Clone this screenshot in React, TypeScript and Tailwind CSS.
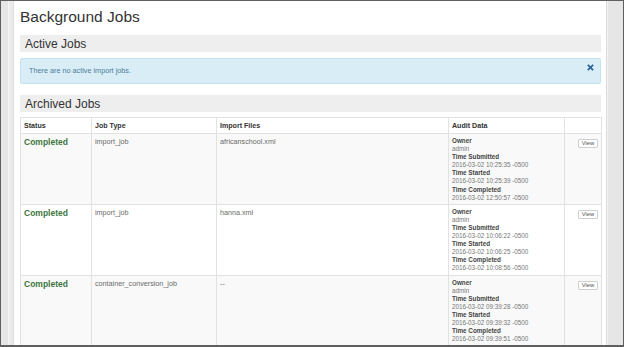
import React from 'react';

const jobs = [
  {
    type: 'import_job',
    file: 'africanschool.xml',
    submitted: '2016-03-02 10:25:35 -0500',
    started: '2016-03-02 10:25:39 -0500',
    completed: '2016-03-02 12:50:57 -0500',
  },
  {
    type: 'import_job',
    file: 'hanna.xml',
    submitted: '2016-03-02 10:06:22 -0500',
    started: '2016-03-02 10:06:25 -0500',
    completed: '2016-03-02 10:08:56 -0500',
  },
  {
    type: 'container_conversion_job',
    file: '--',
    submitted: '2016-03-02 09:39:28 -0500',
    started: '2016-03-02 09:39:32 -0500',
    completed: '2016-03-02 09:39:51 -0500',
  },
];

function AuditData({ job }: { job: (typeof jobs)[number] }) {
  const rows = [
    ['Owner', 'admin'],
    ['Time Submitted', job.submitted],
    ['Time Started', job.started],
    ['Time Completed', job.completed],
  ];
  return (
    <div className="text-[6.3px] leading-[8.1px]">
      {rows.map(([label, value]) => (
        <React.Fragment key={label}>
          <div className="font-bold text-[#444]">{label}</div>
          <div className="text-[#777]">{value}</div>
        </React.Fragment>
      ))}
    </div>
  );
}

export default function App() {
  return (
    <div
      className="w-[624px] h-[347px] border border-[#5f5f5f] border-b-2 bg-[#e8e8e8] flex overflow-hidden"
      style={{ fontFamily: '"Liberation Sans", Arial, sans-serif' }}
    >
      <div className="w-[12px] shrink-0 bg-[#ebebeb] flex">
        <div className="w-[7px] bg-[#e6e6e6]" />
        <div className="w-[1px] bg-[#f6f6f6]" />
      </div>

      <div className="w-[594px] shrink-0 bg-white border-x border-[#dcdcdc] pl-[6px] pr-[5px] pt-[6px]">
        <h1 className="text-[15.5px] leading-[20px] text-[#333]">Background Jobs</h1>

        <div className="mt-[8px] h-[17px] bg-[#eeeeee] px-[5px] flex items-center text-[12px] text-[#333]">
          Active Jobs
        </div>

        <div className="mt-[6px] h-[26px] bg-[#d9edf7] border border-[#c4e3f0] rounded-[2px] pl-[8px] pr-[6px] flex items-center justify-between">
          <span className="text-[7.25px] text-[#4a7d98]">There are no active import jobs.</span>
          <svg viewBox="0 0 10 10" className="w-[7px] h-[7px] self-start mt-[5px]">
            <path d="M2 2 L8 8 M8 2 L2 8" stroke="#2a6399" strokeWidth="2.4" strokeLinecap="square" />
          </svg>
        </div>

        <div className="mt-[11px] h-[17px] bg-[#eeeeee] px-[5px] flex items-center text-[12px] text-[#333]">
          Archived Jobs
        </div>

        <table className="mt-[5px] w-[581px] border-collapse table-fixed">
          <colgroup>
            <col className="w-[71px]" />
            <col className="w-[125px]" />
            <col className="w-[232px]" />
            <col className="w-[116px]" />
            <col className="w-[37px]" />
          </colgroup>
          <thead>
            <tr className="text-[7.1px] font-bold text-[#333] text-left">
              <th className="border border-[#e2e2e2] px-[3px] pt-[3px] pb-[2px] leading-[10px]">Status</th>
              <th className="border border-[#e2e2e2] px-[3px] pt-[3px] pb-[2px] leading-[10px]">Job Type</th>
              <th className="border border-[#e2e2e2] px-[3px] pt-[3px] pb-[2px] leading-[10px]">Import Files</th>
              <th className="border border-[#e2e2e2] px-[3px] pt-[3px] pb-[2px] leading-[10px]">Audit Data</th>
              <th className="border border-[#e2e2e2] px-[3px] pt-[3px] pb-[2px] leading-[10px]"></th>
            </tr>
          </thead>
          <tbody>
            {jobs.map((job, i) => (
              <tr key={i} className={i % 2 === 0 ? 'bg-[#f9f9f9]' : 'bg-white'}>
                <td className="border border-[#e2e2e2] px-[3px] pt-[2px] align-top">
                  <div className="text-[8.5px] leading-[12px] font-bold text-[#3c763d]">Completed</div>
                </td>
                <td className="border border-[#e2e2e2] px-[3px] pt-[3px] align-top">
                  <div className="text-[7.2px] leading-[10px] text-[#6a6a6a]">{job.type}</div>
                </td>
                <td className="border border-[#e2e2e2] px-[3px] pt-[3px] align-top">
                  <div className="text-[7.2px] leading-[10px] text-[#6a6a6a]">{job.file}</div>
                </td>
                <td className="border border-[#e2e2e2] px-[3px] pt-[3px] pb-[2px] align-top">
                  <AuditData job={job} />
                </td>
                <td className="border border-[#e2e2e2] pr-[3px] pt-[5px] align-top">
                  <div className="flex justify-end">
                    <button className="w-[20px] h-[9px] border border-[#cfcfcf] rounded-[1px] bg-white text-[5.8px] leading-[7px] text-[#555]">
                      View
                    </button>
                  </div>
                </td>
              </tr>
            ))}
          </tbody>
        </table>
      </div>

      <div className="flex-1 bg-[#e6e6e6] border-l border-[#f2f2f2]" />
    </div>
  );
}
